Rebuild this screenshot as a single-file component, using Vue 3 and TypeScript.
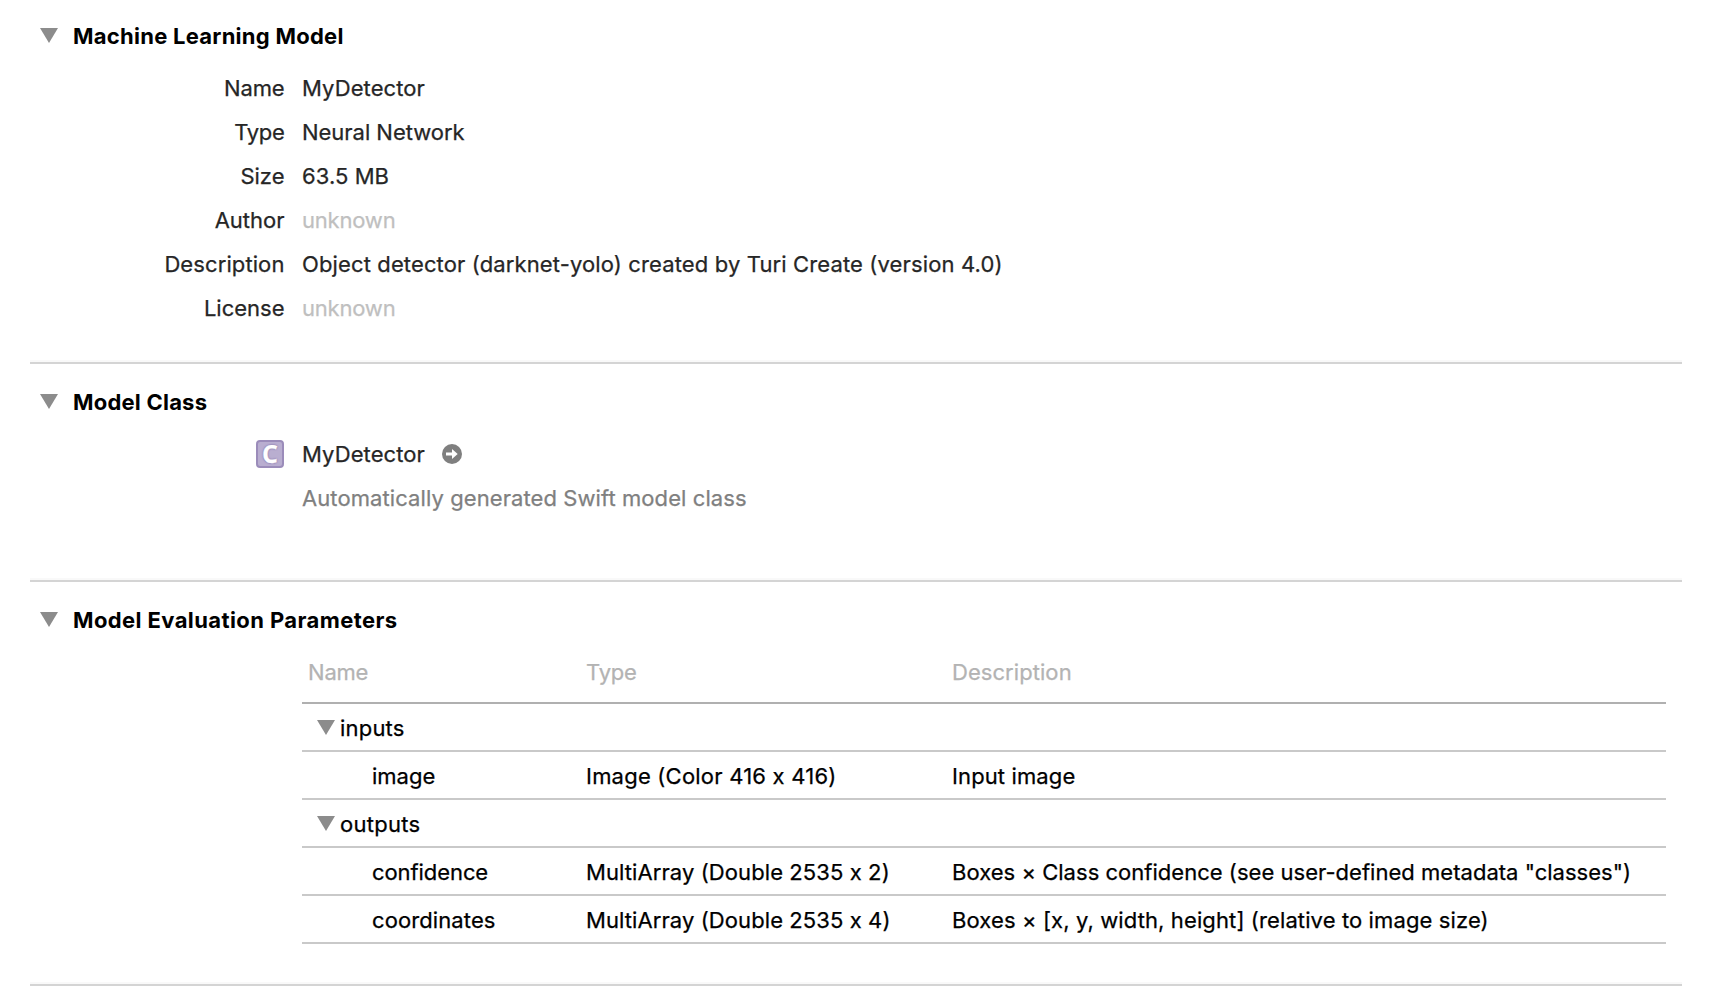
<script setup lang="ts">
interface Field {
  label: string
  value: string
  muted?: boolean
  labelSpacing: number
  valueSpacing: number
}

interface Cell {
  text: string
  spacing: number
}

interface Row {
  name: Cell
  group?: boolean
  type?: Cell
  description?: Cell
}

// Spacing values are letter-spacing in pixels.
const fields: Field[] = [
  { label: 'Name', value: 'MyDetector', labelSpacing: -0.15, valueSpacing: 0.1 },
  { label: 'Type', value: 'Neural Network', labelSpacing: -0.3, valueSpacing: -0.03 },
  { label: 'Size', value: '63.5 MB', labelSpacing: 0, valueSpacing: 0.07 },
  { label: 'Author', value: 'unknown', muted: true, labelSpacing: 0, valueSpacing: -0.2 },
  {
    label: 'Description',
    value: 'Object detector (darknet-yolo) created by Turi Create (version 4.0)',
    labelSpacing: 0.1,
    valueSpacing: 0.129,
  },
  { label: 'License', value: 'unknown', muted: true, labelSpacing: 0, valueSpacing: -0.2 },
]

const columns: Cell[] = [
  { text: 'Name', spacing: -0.2 },
  { text: 'Type', spacing: -0.2 },
  { text: 'Description', spacing: 0.06 },
]

const rows: Row[] = [
  { name: { text: 'inputs', spacing: 0.2 }, group: true },
  {
    name: { text: 'image', spacing: 0 },
    type: { text: 'Image (Color 416 x 416)', spacing: 0.22 },
    description: { text: 'Input image', spacing: 0.12 },
  },
  { name: { text: 'outputs', spacing: 0.28 }, group: true },
  {
    name: { text: 'confidence', spacing: -0.08 },
    type: { text: 'MultiArray (Double 2535 x 2)', spacing: 0.09 },
    description: {
      text: 'Boxes × Class confidence (see user-defined metadata "classes")',
      spacing: 0.025,
    },
  },
  {
    name: { text: 'coordinates', spacing: 0.1 },
    type: { text: 'MultiArray (Double 2535 x 4)', spacing: 0.09 },
    description: {
      text: 'Boxes × [x, y, width, height] (relative to image size)',
      spacing: 0.115,
    },
  },
]

const track = (px?: number) => ({ letterSpacing: `${px ?? 0}px` })
</script>

<template>
  <main class="inspector">
    <section class="section model">
      <h2 class="title">
        <svg class="disclosure" viewBox="0 0 18 15"><path d="M0 0H18L9 15Z" /></svg>
        <span :style="track(0.26)">Machine Learning Model</span>
      </h2>
      <dl class="fields">
        <div v-for="f in fields" :key="f.label" class="field">
          <dt :style="track(f.labelSpacing)">{{ f.label }}</dt>
          <dd :class="{ muted: f.muted }" :style="track(f.valueSpacing)">{{ f.value }}</dd>
        </div>
      </dl>
    </section>

    <section class="section class-info">
      <h2 class="title">
        <svg class="disclosure" viewBox="0 0 18 15"><path d="M0 0H18L9 15Z" /></svg>
        <span :style="track(0.22)">Model Class</span>
      </h2>
      <div class="fields">
        <div class="field">
          <div class="badge-slot">
            <div class="badge">C</div>
          </div>
          <div class="class-name">
            <span :style="track(0.1)">MyDetector</span>
            <svg class="jump" viewBox="0 0 20 20">
              <circle cx="10" cy="10" r="10" fill="#7f7f7f" />
              <path d="M4 8.5H10V5L15.7 10L10 15V11.5H4Z" fill="#fff" />
            </svg>
          </div>
        </div>
        <div class="field">
          <div class="badge-slot"></div>
          <div class="note" :style="track(0.085)">Automatically generated Swift model class</div>
        </div>
      </div>
    </section>

    <section class="section parameters">
      <h2 class="title">
        <svg class="disclosure" viewBox="0 0 18 15"><path d="M0 0H18L9 15Z" /></svg>
        <span :style="track(0.4)">Model Evaluation Parameters</span>
      </h2>
      <div class="table">
        <div class="row head">
          <span v-for="c in columns" :key="c.text" :style="track(c.spacing)">{{ c.text }}</span>
        </div>
        <div v-for="r in rows" :key="r.name.text" class="row">
          <span class="name" :class="{ group: r.group }" :style="track(r.name.spacing)">
            <svg v-if="r.group" class="disclosure" viewBox="0 0 18 15"><path d="M0 0H18L9 15Z" /></svg>
            {{ r.name.text }}
          </span>
          <span :style="track(r.type?.spacing)">{{ r.type?.text }}</span>
          <span :style="track(r.description?.spacing)">{{ r.description?.text }}</span>
        </div>
      </div>
    </section>
  </main>
</template>

<style>
body {
  background: #fff;
}
</style>

<style scoped>
.inspector {
  box-sizing: border-box;
  width: 1710px;
  height: 1006px;
  padding: 0 28px 0 30px;
  overflow: hidden;
  background: #fff;
  color: #262626;
  font-family: Inter, 'Liberation Sans', sans-serif;
  font-size: 22px;
  line-height: 44px;
  font-feature-settings: 'calt' 0;
  -webkit-text-stroke: 0.25px currentColor;
  white-space: nowrap;
}

.section {
  box-sizing: border-box;
  border-bottom: 2px solid #d4d4d4;
  box-shadow: inset 0 -2px 0 #f9f9f9;
}

.model {
  height: 364px;
  padding-top: 14px;
}

.class-info {
  height: 218px;
  padding-top: 16px;
}

.parameters {
  height: 404px;
  padding-top: 16px;
}

.title {
  display: flex;
  align-items: center;
  gap: 15px;
  height: 44px;
  margin: 0 0 8px;
  padding-left: 10px;
  color: #000;
  font-size: 22px;
  font-weight: 700;
  -webkit-text-stroke: 0;
}

.disclosure {
  flex: none;
  width: 18px;
  height: 15px;
  fill: #8c8c8c;
}

.title .disclosure {
  margin-bottom: 1px;
}

.fields {
  margin: 0;
}

.field {
  display: flex;
  gap: 17.5px;
  height: 44px;
}

.field dt,
.badge-slot {
  flex: none;
  width: 254.5px;
  text-align: right;
}

.field dd {
  margin: 0;
}

.field .muted {
  color: #bfbfbf;
}

.badge-slot {
  display: flex;
  align-items: center;
  justify-content: flex-end;
  width: 254px;
  margin-right: 0.5px;
}

.badge {
  box-sizing: border-box;
  width: 28px;
  height: 28px;
  border: 2px solid #9b8cba;
  border-radius: 4px;
  background: #b9aed0;
  color: #fff;
  font-family: 'Open Sans', sans-serif;
  font-size: 25px;
  font-weight: 700;
  line-height: 22px;
  text-align: center;
  text-shadow:
    0 0 2px #8777ab,
    0 0 2px #8777ab;
}

.class-name {
  display: flex;
  align-items: center;
  gap: 17px;
}

.jump {
  width: 20px;
  height: 20px;
}

.note {
  color: #808080;
}

.table {
  margin: 0 16px 0 272px;
}

.row {
  display: grid;
  grid-template-columns: 278px 366px 1fr;
  box-sizing: border-box;
  height: 48px;
  padding: 2px 0 0 6px;
  border-bottom: 2px solid #c9c9c9;
  color: #000;
}

.head {
  height: 54px;
  padding-top: 0;
  border-bottom-color: #b0b0b0;
  color: #b3b3b3;
}

.name {
  padding-left: 64px;
}

.group {
  display: flex;
  align-items: center;
  gap: 5px;
  padding-left: 9px;
}

.group .disclosure {
  margin-bottom: 1px;
}
</style>
